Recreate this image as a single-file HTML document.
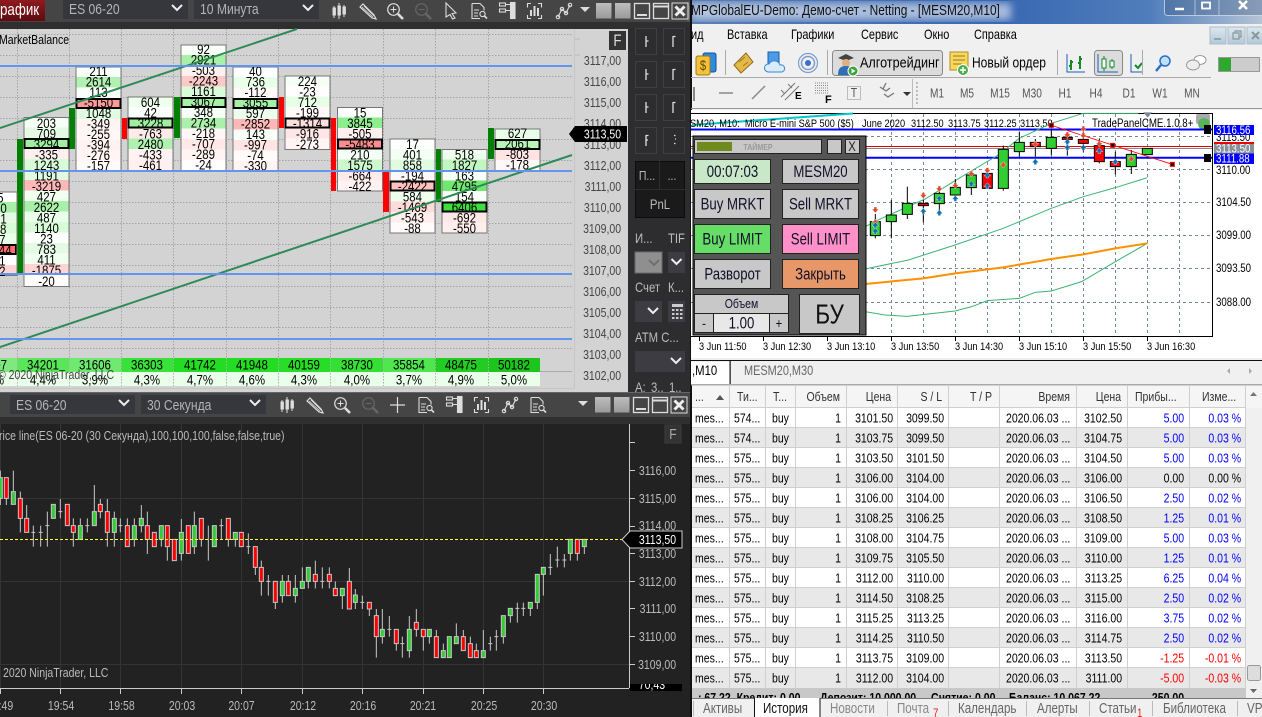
<!DOCTYPE html>
<html lang="ru"><head><meta charset="utf-8"><title>Trading</title>
<style>
html,body{margin:0;padding:0;background:#222;width:1262px;height:717px;overflow:hidden}
svg{position:absolute;left:0;top:0;display:block}
text{font-family:"Liberation Sans","Noto Sans CJK JP",sans-serif;font-size:13px;fill:#000;white-space:pre}
.l,.r,.c{transform-box:fill-box;transform:scaleX(.81)}
.f{transform-box:fill-box;transform:scaleX(.85)}
.u15 .f{transform:translateY(-1.500px) scaleX(.85)}
.u7 .f{transform:translateY(-.700px) scaleX(.85)}
.l{transform-origin:0 50%}
.r{transform-origin:100% 50%;text-anchor:end}
.c{transform-origin:50% 50%;text-anchor:middle}
.f{transform-origin:50% 50%;text-anchor:middle;font-size:13.5px}
.ax text{fill:#444}
.dk text{fill:#bbb}
.pn text{fill:#bbb}
.sm text{font-size:11.4px}
.tg{font-size:12px}
.btn text{font-size:16.3px;fill:#101028}
.b text{fill:#0000ff}
.n text{fill:#f00}
.tf text{fill:#555;font-size:12.5px}
.hd text{fill:#333;font-size:13px}
</style></head><body>
<svg width="1262" height="717" viewBox="0 0 1262 717" xmlns="http://www.w3.org/2000/svg">
<defs>
<linearGradient id="rd" x1="0" y1="0" x2="0" y2="1"><stop offset="0" stop-color="#8e1a1f"/><stop offset="1" stop-color="#5e0c10"/></linearGradient>
<linearGradient id="sq" x1="0" y1="0" x2="0" y2="1"><stop offset="0" stop-color="#bdbdbd"/><stop offset="1" stop-color="#9a9a9a"/></linearGradient>
<linearGradient id="ti" x1="0" y1="0" x2="1" y2="0"><stop offset="0" stop-color="#5c7fb6"/><stop offset=".25" stop-color="#4a73b3"/><stop offset=".55" stop-color="#3a68b2"/><stop offset=".8" stop-color="#4f7dbb"/><stop offset="1" stop-color="#b5c4d6"/></linearGradient>
<linearGradient id="md" x1="0" y1="0" x2="0" y2="1"><stop offset="0" stop-color="#dde8f0"/><stop offset="1" stop-color="#b4c8d6"/></linearGradient>
<filter id="bl"><feGaussianBlur stdDeviation="4"/></filter>
<g id="i-c" fill="none" stroke="#ddd"><path d="M2 3v12M7 0v16M12 2v12"/><rect x="1" y="5" width="2.4" height="7" fill="#ddd"/><rect x="6" y="3" width="2.4" height="9" fill="#ddd"/><rect x="11" y="4" width="2.4" height="7" fill="#ddd"/></g>
<g id="i-p" fill="none" stroke="#ddd" stroke-width="1.2"><path d="M1 4L4 1L15 12L17 16L13 15Z"/><path d="M3 4L14 14M5 3L15 13" stroke-width=".8"/></g>
<g id="i-z" fill="none" stroke="#ddd"><circle cx="6.5" cy="6.5" r="5.8" stroke-width="1.2"/><path d="M3.5 6.5h6M6.5 3.5v6"/><path d="M11 11l5 5" stroke-width="2.6"/></g>
<g id="i-m" fill="none" stroke="#666"><circle cx="6.5" cy="6.5" r="5.8" stroke-width="1.2"/><path d="M3.5 6.5h6"/><path d="M11 11l5 5" stroke-width="2.6"/></g>
<g id="i-d" fill="none" stroke="#ddd" stroke-width="1.1"><path d="M1 .5h8l4 4v3M1 .5v15h8"/><path d="M3 7h5M3 10h4M3 13h4"/><circle cx="11.5" cy="11" r="2.6"/><path d="M13.5 13l2.5 2.5" stroke-width="1.6"/></g>
<g id="i-l" fill="none" stroke="#ddd" stroke-width="1.1"><rect x=".5" y="1" width="6" height="3"/><rect x=".5" y="7" width="6" height="3"/><path d="M6.5 2.500h5M6.500 8.500h5"/><rect x="11.500" y=".5" width="4.500" height="16" fill="#ddd"/></g>
<g id="i-b" fill="none" stroke="#ddd"><path d="M4 .5H.5v4M11 .5h3.500v4M.5 12v3.500H4M14.500 12v3.500H11" stroke-width="1.1"/><path d="M4 7v6M7.500 3v10M11 5v8" stroke-width="2"/></g>
<g id="i-y" fill="none" stroke="#ddd" stroke-width="1.1"><path d="M2 14L6 6L10 10L14 2"/><circle cx="2" cy="14" r="1.700"/><circle cx="6" cy="6" r="1.700"/><circle cx="10" cy="10" r="1.700"/><circle cx="14" cy="2" r="1.700"/></g>
<g id="i-w"><rect width="15.500" height="15.500" fill="url(#sq)"/><rect x="19" width="15.500" height="15.500" fill="url(#sq)"/>
<g fill="none" stroke="#ddd" stroke-width="1.300"><rect x="38.500" y=".5" width="15" height="15"/><path d="M41 12h10" stroke-width="2"/><rect x="57.500" y=".5" width="15" height="15"/><path d="M58 3.500h14" stroke-width="2"/></g>
<rect x="76" y="0" width="16" height="16" fill="none" stroke="#ddd" stroke-width="1"/><path d="M79.500 3.500l9 9M88.500 3.500l-9 9" stroke="#eee" stroke-width="3"/></g>
<path id="dn" d="M-4 -9H4V-3H10L0 9L-10 -3H-4Z" fill="#e2492c" stroke="#fff" stroke-width="1"/>
<path id="up" d="M-4 9H4V3H10L0 -9L-10 3H-4Z" fill="#0e6fb5" stroke="#fff" stroke-width="1"/>
<g id="ck" fill="none" stroke="#eee" stroke-width="2"><path d="M-5 -3L0 2L5 -3"/></g>
</defs>

<!-- NT top -->
<rect x="0" y="0" width="690" height="22" fill="#454545"/>
<rect x="0" y="22" width="690" height="7" fill="#2f2f2f"/>
<rect x="0" y="0" width="45" height="21" fill="url(#rd)"/>
<text class="l" x="0" y="15" style="font-size:16.500px;fill:#fff">рафик</text>
<rect x="63" y="0" width="125" height="19" fill="#36373c"/>
<text class="l" x="69" y="14" style="font-size:15px;fill:#b4b4b4">ES 06-20</text>
<use href="#ck" x="177" y="8"/>
<rect x="194" y="0" width="125" height="19" fill="#36373c"/>
<text class="l" x="200" y="14" style="font-size:15px;fill:#b4b4b4">10 Минута</text>
<use href="#ck" x="308" y="8"/>
<use href="#i-c" x="332" y="3"/><use href="#i-p" x="359" y="3"/><use href="#i-z" x="387" y="3"/><use href="#i-m" x="415" y="3"/>
<path d="M446 3L456 13L452 13.500L455 18L452.500 19L450 14.500L446 17Z" fill="none" stroke="#ddd" stroke-width="1.100"/>
<use href="#i-d" x="471" y="3"/><use href="#i-l" x="499" y="2"/><use href="#i-b" x="527" y="3"/><use href="#i-y" x="556" y="3"/>
<path d="M580 7h10l-5 5z" fill="#ddd"/>
<use href="#i-w" x="596" y="3"/>

<!-- upper chart -->
<rect x="0" y="29" width="628" height="363" fill="#d3d3d3"/>
<path d="M0 34.500H572M0 55.500H572M0 76.500H572M0 97.500H572M0 118.500H572M0 139.500H572M0 160.500H572M0 181.500H572M0 202.500H572M0 223.500H572M0 244.500H572M0 265.500H572M0 286.500H572M0 307.500H572M0 327.500H572M0 348.500H572M17.500 29V386M69.500 29V386M121.500 29V386M173.500 29V386M226.500 29V386M278.500 29V386M330.500 29V386M383.500 29V386M435.500 29V386M488.500 29V386" fill="none" stroke="#a4a4a4" stroke-dasharray="1.500 1.500"/>
<path d="M574.500 29V389M0 388.500H574" stroke="#c6c6c6"/>
<path d="M0 371.500H572" stroke="#aaa"/>
<text class="l" x="-1" y="44">MarketBalance</text>

<!-- delta bars -->
<g>
<rect x="17" y="139" width="6" height="136" fill="#008000"/>
<rect x="69" y="108" width="6" height="41" fill="#008000"/>
<rect x="122" y="118" width="5" height="21" fill="#f00"/>
<rect x="174" y="97" width="6" height="41" fill="#008000"/>
<rect x="279" y="97" width="5" height="31" fill="#f00"/>
<rect x="331" y="118" width="5" height="73" fill="#f00"/>
<rect x="383" y="170" width="6" height="42" fill="#f00"/>
<rect x="436" y="149" width="5" height="53" fill="#008000"/>
<rect x="488" y="128" width="6" height="31" fill="#008000"/>
</g>

<!-- col A -->
<g transform="translate(-29,191.500)">
<rect width="46" height="84" fill="#fff"/>
<rect y="10.500" width="46" height="10.500" fill="#a8f0a8"/><rect y="21" width="46" height="10.500" fill="#e4fae4"/><rect y="31.500" width="46" height="10.500" fill="#d8fbd8"/><rect y="42" width="46" height="10.500" fill="#eaffea"/><rect x="1" y="53.500" width="44" height="9" fill="#ff7070" stroke="#000" stroke-width="2"/><rect y="73.500" width="46" height="10.500" fill="#ffd4d4"/>
<rect x=".5" y=".5" width="45.500" height="83.500" fill="none" stroke="#777"/>
<text class="f" x="23" y="11">205</text><text class="f" x="23" y="21.500">2620</text><text class="f" x="23" y="32">1351</text><text class="f" x="23" y="42.500">1148</text><text class="f" x="23" y="53">-367</text><text class="f" x="26" y="63.500">-5144</text><text class="f" x="23" y="74">-451</text><text class="f" x="23" y="84.500">-402</text>
</g>
<!-- col B -->
<g transform="translate(23.500,117)">
<rect y="0" width="46" height="10.500" fill="#f5fff5"/><rect y="10.500" width="46" height="10.500" fill="#e4fae4"/><rect y="21" width="46" height="10.500" fill="#9ef09e"/><rect y="31.500" width="46" height="10.500" fill="#fff0f0"/><rect y="42" width="46" height="10.500" fill="#d8fbd8"/><rect y="52.500" width="46" height="10.500" fill="#e0fbe0"/><rect y="63" width="46" height="10.500" fill="#ffb8b8"/><rect y="73.500" width="46" height="10.500" fill="#f0fff0"/><rect y="84" width="46" height="10.500" fill="#a8f0a8"/><rect y="94.500" width="46" height="10.500" fill="#eaffea"/><rect y="105" width="46" height="10.500" fill="#d8fbd8"/><rect y="115.500" width="46" height="10.500" fill="#fcfffc"/><rect y="126" width="46" height="10.500" fill="#e4fae4"/><rect y="136.500" width="46" height="10.500" fill="#f0fff0"/><rect y="147" width="46" height="10.500" fill="#ffd4d4"/><rect y="157.500" width="46" height="12" fill="#fffcfc"/>
<rect x=".5" y=".5" width="45" height="169" fill="none" stroke="#777"/>
<rect x="1" y="22" width="44" height="9" fill="none" stroke="#000" stroke-width="2"/>
<text class="f" x="23" y="11">203</text><text class="f" x="23" y="21.500">709</text><text class="f" x="23" y="32">3294</text><text class="f" x="23" y="42.500">-335</text><text class="f" x="23" y="53">1243</text><text class="f" x="23" y="63.500">1191</text><text class="f" x="23" y="74">-3219</text><text class="f" x="23" y="84.500">427</text><text class="f" x="23" y="95">2622</text><text class="f" x="23" y="105.500">487</text><text class="f" x="23" y="116">1140</text><text class="f" x="23" y="126.500">23</text><text class="f" x="23" y="137">783</text><text class="f" x="23" y="147.500">411</text><text class="f" x="23" y="158">-1875</text><text class="f" x="23" y="169">-20</text>
</g>
<!-- col C -->
<g class="u15" transform="translate(75.500,66.500)">
<rect y="0" width="46" height="10.500" fill="#f8fff8"/><rect y="10.500" width="46" height="10.500" fill="#b0f0b0"/><rect y="21" width="46" height="10.500" fill="#fbfffb"/><rect y="31.500" width="46" height="10.500" fill="#ff9a9a"/><rect y="42" width="46" height="10.500" fill="#e0fbe0"/><rect y="52.500" width="46" height="10.500" fill="#fff4f4"/><rect y="63" width="46" height="10.500" fill="#fff6f6"/><rect y="73.500" width="46" height="10.500" fill="#fff2f2"/><rect y="84" width="46" height="10.500" fill="#fff5f5"/><rect y="94.500" width="46" height="10" fill="#fffafa"/>
<rect x=".5" y=".5" width="45" height="104" fill="none" stroke="#777"/>
<rect x="1" y="32.500" width="44" height="9" fill="none" stroke="#000" stroke-width="2"/>
<text class="f" x="23" y="11">211</text><text class="f" x="23" y="21.500">2614</text><text class="f" x="23" y="32">113</text><text class="f" x="23" y="42.500">-5150</text><text class="f" x="23" y="53">1048</text><text class="f" x="23" y="63.500">-349</text><text class="f" x="23" y="74">-255</text><text class="f" x="23" y="84.500">-394</text><text class="f" x="23" y="95">-276</text><text class="f" x="23" y="105.500">-157</text>
</g>
<!-- col D -->
<g class="u7" transform="translate(127.500,96.500)">
<rect y="0" width="46" height="10.500" fill="#eeffee"/><rect y="10.500" width="46" height="10.500" fill="#fbfffb"/><rect y="21" width="46" height="10.500" fill="#9ef09e"/><rect y="31.500" width="46" height="10.500" fill="#ffeaea"/><rect y="42" width="46" height="10.500" fill="#b0f0b0"/><rect y="52.500" width="46" height="10.500" fill="#fff2f2"/><rect y="63" width="46" height="11" fill="#fff0f0"/>
<rect x=".5" y=".5" width="45" height="73.500" fill="none" stroke="#777"/>
<rect x="1" y="22" width="44" height="9" fill="none" stroke="#000" stroke-width="2"/>
<text class="f" x="23" y="11">604</text><text class="f" x="23" y="21.500">42</text><text class="f" x="23" y="32">3228</text><text class="f" x="23" y="42.500">-763</text><text class="f" x="23" y="53">2480</text><text class="f" x="23" y="63.500">-433</text><text class="f" x="23" y="74">-461</text>
</g>
<!-- col E -->
<g class="u15" transform="translate(180.500,44.500)">
<rect y="0" width="46" height="10.500" fill="#f9fff9"/><rect y="10.500" width="46" height="10.500" fill="#a8f0a8"/><rect y="21" width="46" height="10.500" fill="#fff0f0"/><rect y="31.500" width="46" height="10.500" fill="#ffc8c8"/><rect y="42" width="46" height="10.500" fill="#d8fbd8"/><rect y="52.500" width="46" height="10.500" fill="#a4f0a4"/><rect y="63" width="46" height="10.500" fill="#f5fff5"/><rect y="73.500" width="46" height="10.500" fill="#aaf0aa"/><rect y="84" width="46" height="10.500" fill="#fff6f6"/><rect y="94.500" width="46" height="10.500" fill="#ffe8e8"/><rect y="105" width="46" height="10.500" fill="#fff4f4"/><rect y="115.500" width="46" height="10.500" fill="#fffdfd"/>
<rect x=".5" y=".5" width="45" height="125.500" fill="none" stroke="#777"/>
<rect x="1" y="53.500" width="44" height="9" fill="none" stroke="#000" stroke-width="2"/>
<text class="f" x="23" y="11">92</text><text class="f" x="23" y="21.500">2921</text><text class="f" x="23" y="32">-503</text><text class="f" x="23" y="42.500">-2243</text><text class="f" x="23" y="53">1161</text><text class="f" x="23" y="63.500">3067</text><text class="f" x="23" y="74">348</text><text class="f" x="23" y="84.500">2734</text><text class="f" x="23" y="95">-218</text><text class="f" x="23" y="105.500">-707</text><text class="f" x="23" y="116">-289</text><text class="f" x="23" y="126.500">-24</text>
</g>
<!-- col F -->
<g class="u15" transform="translate(232.500,66.500)">
<rect y="0" width="46" height="10.500" fill="#fcfffc"/><rect y="10.500" width="46" height="10.500" fill="#e8ffe8"/><rect y="21" width="46" height="10.500" fill="#fffafa"/><rect y="31.500" width="46" height="10.500" fill="#a4f0a4"/><rect y="42" width="46" height="10.500" fill="#ecffec"/><rect y="52.500" width="46" height="10.500" fill="#ffb8b8"/><rect y="63" width="46" height="10.500" fill="#f8fff8"/><rect y="73.500" width="46" height="10.500" fill="#ffe4e4"/><rect y="84" width="46" height="10.500" fill="#fffbfb"/><rect y="94.500" width="46" height="10" fill="#fff3f3"/>
<rect x=".5" y=".5" width="45" height="104" fill="none" stroke="#777"/>
<rect x="1" y="32.500" width="44" height="9" fill="none" stroke="#000" stroke-width="2"/>
<text class="f" x="23" y="11">40</text><text class="f" x="23" y="21.500">736</text><text class="f" x="23" y="32">-112</text><text class="f" x="23" y="42.500">3055</text><text class="f" x="23" y="53">597</text><text class="f" x="23" y="63.500">-2852</text><text class="f" x="23" y="74">143</text><text class="f" x="23" y="84.500">-997</text><text class="f" x="23" y="95">-74</text><text class="f" x="23" y="105.500">-330</text>
</g>
<!-- col G -->
<g class="u7" transform="translate(284.500,75.500)">
<rect y="0" width="46" height="10.500" fill="#f6fff6"/><rect y="10.500" width="46" height="10.500" fill="#fffdfd"/><rect y="21" width="46" height="10.500" fill="#e8ffe8"/><rect y="31.500" width="46" height="10.500" fill="#fff8f8"/><rect y="42" width="46" height="10.500" fill="#ffdede"/><rect y="52.500" width="46" height="10.500" fill="#ffe6e6"/><rect y="63" width="46" height="11" fill="#fff5f5"/>
<rect x=".5" y=".5" width="45" height="73.500" fill="none" stroke="#777"/>
<rect x="1" y="43" width="44" height="9" fill="none" stroke="#000" stroke-width="2"/>
<text class="f" x="23" y="11">224</text><text class="f" x="23" y="21.500">-23</text><text class="f" x="23" y="32">712</text><text class="f" x="23" y="42.500">-199</text><text class="f" x="23" y="53">-1314</text><text class="f" x="23" y="63.500">-916</text><text class="f" x="23" y="74">-273</text>
</g>
<!-- col H -->
<g class="u7" transform="translate(337,107)">
<rect y="0" width="46" height="10.500" fill="#fcfffc"/><rect y="10.500" width="46" height="10.500" fill="#8cee8c"/><rect y="21" width="46" height="10.500" fill="#fff0f0"/><rect y="31.500" width="46" height="10.500" fill="#ff8c8c"/><rect y="42" width="46" height="10.500" fill="#f6fff6"/><rect y="52.500" width="46" height="10.500" fill="#ccf8cc"/><rect y="63" width="46" height="10.500" fill="#ffeaea"/><rect y="73.500" width="46" height="10.500" fill="#fff2f2"/>
<rect x=".5" y=".5" width="45" height="83.500" fill="none" stroke="#777"/>
<rect x="1" y="32.500" width="44" height="9" fill="none" stroke="#000" stroke-width="2"/>
<text class="f" x="23" y="11">15</text><text class="f" x="23" y="21.500">3845</text><text class="f" x="23" y="32">-505</text><text class="f" x="23" y="42.500">-5483</text><text class="f" x="23" y="53">210</text><text class="f" x="23" y="63.500">1575</text><text class="f" x="23" y="74">-664</text><text class="f" x="23" y="84.500">-422</text>
</g>
<!-- col I -->
<g class="u7" transform="translate(389.500,138.500)">
<rect y="0" width="46" height="10.500" fill="#fcfffc"/><rect y="10.500" width="46" height="10.500" fill="#f2fff2"/><rect y="21" width="46" height="10.500" fill="#e0fbe0"/><rect y="31.500" width="46" height="10.500" fill="#fff8f8"/><rect y="42" width="46" height="10.500" fill="#ffc0c0"/><rect y="52.500" width="46" height="10.500" fill="#eeffee"/><rect y="63" width="46" height="10.500" fill="#ffdada"/><rect y="73.500" width="46" height="10.500" fill="#ffeeee"/><rect y="84" width="46" height="10.500" fill="#fffbfb"/>
<rect x=".5" y=".5" width="45" height="94" fill="none" stroke="#777"/>
<rect x="1" y="43" width="44" height="9" fill="none" stroke="#000" stroke-width="2"/>
<text class="f" x="23" y="11">17</text><text class="f" x="23" y="21.500">401</text><text class="f" x="23" y="32">858</text><text class="f" x="23" y="42.500">-194</text><text class="f" x="23" y="53">-2422</text><text class="f" x="23" y="63.500">584</text><text class="f" x="23" y="74">-1469</text><text class="f" x="23" y="84.500">-543</text><text class="f" x="23" y="95">-88</text>
</g>
<!-- col J -->
<g class="u7" transform="translate(441.500,149)">
<rect y="0" width="46" height="10.500" fill="#eeffee"/><rect y="10.500" width="46" height="10.500" fill="#c0f6c0"/><rect y="21" width="46" height="10.500" fill="#f8fff8"/><rect y="31.500" width="46" height="10.500" fill="#70e870"/><rect y="42" width="46" height="10.500" fill="#f8fff8"/><rect y="52.500" width="46" height="10.500" fill="#3ce03c"/><rect y="63" width="46" height="10.500" fill="#ffe8e8"/><rect y="73.500" width="46" height="10.500" fill="#ffeeee"/>
<rect x=".5" y=".5" width="45" height="83.500" fill="none" stroke="#777"/>
<rect x="1" y="53.500" width="44" height="9" fill="none" stroke="#000" stroke-width="2"/>
<text class="f" x="23" y="11">518</text><text class="f" x="23" y="21.500">1827</text><text class="f" x="23" y="32">163</text><text class="f" x="23" y="42.500">4795</text><text class="f" x="23" y="53">154</text><text class="f" x="23" y="63.500">6406</text><text class="f" x="23" y="74">-692</text><text class="f" x="23" y="84.500">-550</text>
</g>
<!-- col K -->
<g class="u15" transform="translate(494.500,128.500)">
<rect y="0" width="46" height="10.500" fill="#e8ffe8"/><rect y="10.500" width="46" height="10.500" fill="#b8f4b8"/><rect y="21" width="46" height="10.500" fill="#ffe4e4"/><rect y="31.500" width="46" height="10.500" fill="#fff8f8"/>
<rect x=".5" y=".5" width="45" height="41.500" fill="none" stroke="#777"/>
<rect x="1" y="11.500" width="44" height="9" fill="none" stroke="#000" stroke-width="2"/>
<text class="f" x="23" y="11">627</text><text class="f" x="23" y="21.500">2061</text><text class="f" x="23" y="32">-803</text><text class="f" x="23" y="42.500">-178</text>
</g>

<!-- overlay lines -->
<path d="M0 128L297 29M0 347L572 155" stroke="#2e8b57" stroke-width="2" fill="none"/>
<path d="M0 66H572M0 171H572M0 274H572M0 339H572" stroke="#6495ed" stroke-width="2" fill="none"/>

<!-- volume rows -->
<g>
<rect x="0" y="358" width="17" height="14" fill="#7fe97f"/><rect x="17" y="358" width="52" height="14" fill="#58e758"/><rect x="69" y="358" width="52" height="14" fill="#70e970"/><rect x="121" y="358" width="52" height="14" fill="#38e238"/><rect x="173" y="358" width="53" height="14" fill="#22dd22"/><rect x="226" y="358" width="52" height="14" fill="#22dd22"/><rect x="278" y="358" width="52" height="14" fill="#26de26"/><rect x="330" y="358" width="53" height="14" fill="#33e033"/><rect x="383" y="358" width="52" height="14" fill="#50e650"/><rect x="435" y="358" width="53" height="14" fill="#22cc22"/><rect x="488" y="358" width="52" height="14" fill="#1cc61c"/>
<rect x="0" y="372" width="540" height="14" fill="#eaffea"/>
<path d="M17.500 358V386M69.500 358V386M121.500 358V386M173.500 358V386M226.500 358V386M278.500 358V386M330.500 358V386M383.500 358V386M435.500 358V386M488.500 358V386" stroke="#b0b0b0" stroke-dasharray="1.500 1.500"/>
<text class="f" x="-9" y="369.500">38207</text><text class="f" x="43" y="369.500">34201</text><text class="f" x="95" y="369.500">31606</text><text class="f" x="147" y="369.500">36303</text><text class="f" x="200" y="369.500">41742</text><text class="f" x="252" y="369.500">41948</text><text class="f" x="304" y="369.500">40159</text><text class="f" x="357" y="369.500">38730</text><text class="f" x="409" y="369.500">35854</text><text class="f" x="461" y="369.500">48475</text><text class="f" x="514" y="369.500">50182</text>
<text class="f" x="-9" y="384.500">4,0%</text><text class="f" x="43" y="384.500">4,4%</text><text class="f" x="95" y="384.500">3,9%</text><text class="f" x="147" y="384.500">4,3%</text><text class="f" x="200" y="384.500">4,7%</text><text class="f" x="252" y="384.500">4,6%</text><text class="f" x="304" y="384.500">4,3%</text><text class="f" x="357" y="384.500">4,0%</text><text class="f" x="409" y="384.500">3,7%</text><text class="f" x="461" y="384.500">4,9%</text><text class="f" x="514" y="384.500">5,0%</text>
</g>
<text class="l" x="-2" y="379" style="fill:#444">© 2020 NinjaTrader, LLC</text>

<!-- upper axis -->
<g class="ax">
<path d="M575 39h5M575 55h5" stroke="#bbb"/>
<text class="r" x="621" y="65">3117,00</text><text class="r" x="621" y="86">3116,00</text><text class="r" x="621" y="107">3115,00</text><text class="r" x="621" y="128">3114,00</text><text class="r" x="621" y="149">3113,00</text><text class="r" x="621" y="170">3112,00</text><text class="r" x="621" y="191">3111,00</text><text class="r" x="621" y="212">3110,00</text><text class="r" x="621" y="233">3109,00</text><text class="r" x="621" y="254">3108,00</text><text class="r" x="621" y="275">3107,00</text><text class="r" x="621" y="296">3106,00</text><text class="r" x="621" y="317">3105,00</text><text class="r" x="621" y="338">3104,00</text><text class="r" x="621" y="359">3103,00</text><text class="r" x="621" y="380">3102,00</text>
</g>
<path d="M569 134L575 126H627V142H575Z" fill="#000"/>
<text class="r" x="621" y="138.500" style="fill:#fff">3113,50</text>
<rect x="609" y="31" width="17" height="19" fill="#333"/>
<text class="c" x="617.500" y="46" style="font-size:16.500px;fill:#ddd">F</text>

<!-- NT panel -->
<rect x="628" y="29" width="62" height="363" fill="#2d2d30"/>
<g fill="none" stroke="#3f3f44"><rect x="635.500" y="28.500" width="21" height="26"/><rect x="663.500" y="28.500" width="21" height="26"/><rect x="635.500" y="61.500" width="21" height="26"/><rect x="663.500" y="61.500" width="21" height="26"/><rect x="635.500" y="94.500" width="21" height="26"/><rect x="663.500" y="94.500" width="21" height="26"/><rect x="635.500" y="127.500" width="21" height="26"/><rect x="663.500" y="127.500" width="21" height="26"/></g>
<g fill="none" stroke="#ddd" stroke-width="1.300">
<path d="M646 36v11M646 41h2.500M673 36v11M673 36.500h2.500M646 69v11M646 74h2.500M673 69v11M673 69.500h2.500M646 102v11M646 107h2.500M673 102v11M673 102.500h2.500M646 135v11M646 135.500h2.500M646 140h2"/>
<path d="M674 135.500h1.500M675 139h1M674 143.500h1.500"/>
</g>
<rect x="635.500" y="161.500" width="49" height="56" fill="#1a1a1a" stroke="#0c0c0c"/>
<path d="M659.500 161v28M635 189.500h50" stroke="#2d2d30"/>
<g class="pn">
<text class="c" x="647" y="180">П...</text><text class="c" x="672" y="180">...</text>
<text class="c" x="660" y="209" style="font-size:14px">PnL</text>
<text class="l" x="635" y="243" style="font-size:14px">И...</text><text class="l" x="668" y="243" style="font-size:14px">TIF</text>
<text class="l" x="635" y="292" style="font-size:14px">Счет</text><text class="l" x="668" y="292" style="font-size:14px">К...</text>
<text class="l" x="635" y="342" style="font-size:14px">ATM С...</text>
<text class="c" x="652" y="366">...</text>
<text class="l" x="635" y="392" style="font-size:14px">А:</text><text class="l" x="651" y="392" style="font-size:14px">3..</text><text class="l" x="669" y="392" style="font-size:14px">1..</text>
</g>
<rect x="635" y="252" width="27" height="21" fill="#8f8f8f" stroke="#6a6a6a"/>
<g fill="none" stroke="#6f6f6f" stroke-width="2"><path d="M649 260l5 5l5-5"/></g>
<rect x="668" y="252" width="17" height="21" fill="#3c3c42"/><use href="#ck" x="676.500" y="262"/>
<rect x="635" y="301" width="27" height="21" fill="#3c3c42"/><use href="#ck" x="653" y="311"/>
<rect x="668" y="301" width="17" height="21" fill="#3c3c42"/>
<g fill="#ccc"><rect x="672" y="304" width="11" height="3"/><path d="M672 309h2.500v2H672zM676 309h2.500v2H676zM680 309h2.500v2H680zM672 313h2.500v2H672zM676 313h2.500v2H676zM680 313h2.500v2H680zM672 317h2.500v2H672zM676 317h2.500v2H676zM680 317h2.500v2H680z"/></g>
<rect x="635" y="351" width="50" height="21" fill="#3c3c42"/><use href="#ck" x="676" y="361"/>

<!-- NT lower toolbar -->
<rect x="0" y="392" width="690" height="1" fill="#666"/>
<rect x="0" y="393" width="690" height="24" fill="#454545"/>
<rect x="0" y="417" width="690" height="7" fill="#2f2f2f"/>
<rect x="10" y="395" width="125" height="19" fill="#36373c"/>
<text class="l" x="16" y="410" style="font-size:15px;fill:#b4b4b4">ES 06-20</text><use href="#ck" x="124" y="403"/>
<rect x="141" y="395" width="125" height="19" fill="#36373c"/>
<text class="l" x="147" y="410" style="font-size:15px;fill:#b4b4b4">30 Секунда</text><use href="#ck" x="255" y="403"/>
<use href="#i-c" x="280" y="397"/><use href="#i-p" x="306" y="397"/><use href="#i-z" x="334" y="397"/><use href="#i-m" x="362" y="397"/>
<path d="M397.500 397v16M390 405h15" stroke="#ddd" stroke-width="1.200"/>
<use href="#i-d" x="418" y="397"/><use href="#i-l" x="446" y="396"/><use href="#i-b" x="474" y="397"/><use href="#i-y" x="502" y="397"/><use href="#i-d" x="530" y="397"/>
<path d="M578 401h10l-5 5z" fill="#ddd"/>
<use href="#i-w" x="595" y="397"/>

<!-- lower chart -->
<rect x="0" y="424" width="690" height="293" fill="#222"/>
<path d="M0 498.500H629M0 581.500H629M0 664.500H629M.5 424V688M60.500 424V688M120.500 424V688M181.500 424V688M241.500 424V688M302.500 424V688M362.500 424V688M423.500 424V688M483.500 424V688M543.500 424V688" stroke="#343434" stroke-width="1"/>
<g transform="translate(0,430) scale(.33333)">
<path fill="none" stroke="#c8c8c8" stroke-width="3" d="M1 122V225M19 143V225M40 122V223M61 185V307M80 225V307M100 287V350M122 287V350M142 245V350M181 207V265M220 265V350M241 265V328M262 265V307M283 165V287M301 207V265M322 207V350M343 245V350M361 265V307M382 265V350M403 265V350M424 225V307M442 245V372M484 287V350M502 287V392M544 267V392M583 245V372M604 265V350M625 287V392M664 267V328M685 265V350M706 307V350M745 310V372M766 350V435M784 392V497M805 435V497M826 454V537M847 435V518M865 435V497M886 435V518M907 412V475M925 412V475M946 392V475M967 412V475M988 412V475M1006 454V497M1027 475V537M94 307h12M116 307h12M136 287h12M175 245h12M256 287h12M355 287h12M658 287h12M739 350h12M799 454h12M961 454h12"/>
<path fill="#32cd32" stroke="#c8c8c8" stroke-width="3" d="M-5 143h12v62h-12zM34 185h12v38h-12zM154 223h12v42h-12zM235 287h12v41h-12zM277 245h12v42h-12zM337 265h12v42h-12zM397 287h12v41h-12zM418 265h12v22h-12zM478 287h12v41h-12zM538 307h12v63h-12zM577 287h12v63h-12zM637 287h12v63h-12zM700 307h12v21h-12zM841 454h12v43h-12zM880 475h12v22h-12zM901 454h12v21h-12zM919 412h12v42h-12zM1021 475h12v22h-12z"/>
<path fill="#f00" stroke="#c8c8c8" stroke-width="3" d="M13 143h12v62h-12zM55 205h12v60h-12zM74 265h12v42h-12zM196 223h12v64h-12zM214 287h12v20h-12zM295 223h12v22h-12zM316 245h12v62h-12zM376 287h12v63h-12zM436 287h12v41h-12zM457 307h12v43h-12zM496 287h12v63h-12zM517 328h12v64h-12zM559 287h12v83h-12zM598 265h12v63h-12zM679 265h12v63h-12zM718 307h12v43h-12zM760 350h12v62h-12zM778 412h12v42h-12zM820 454h12v63h-12zM859 454h12v43h-12zM940 433h12v21h-12zM982 433h12v21h-12zM1000 475h12v22h-12z"/>
</g>
<g transform="translate(345,430) scale(.33333)">
<path fill="none" stroke="#c8c8c8" stroke-width="3" d="M13 414V537M31 477V537M52 497V537M73 517V558M94 537V683M112 537V641M133 558V620M154 598V662M172 620V683M193 558V683M214 537V620M235 598V662M253 598V641M274 600V683M295 641V683M334 580V641M355 600V662M376 620V683M394 641V683M415 600V683M436 620V662M454 600V662M475 557V641M496 535V578M517 518V578M535 518V558M556 517V558M577 433V537M595 412V497M616 372V435M637 350V412M658 372V412M676 328V392M697 328V392M718 328V372M46 517h12M127 598h12M166 641h12M430 641h12M448 620h12M511 535h12M529 535h12M610 412h12M631 390h12M652 390h12"/>
<path fill="#32cd32" stroke="#c8c8c8" stroke-width="3" d="M25 495h12v22h-12zM106 598h12v22h-12zM187 598h12v64h-12zM247 598h12v22h-12zM289 662h12v21h-12zM307 620h12v63h-12zM328 620h12v21h-12zM409 662h12v21h-12zM469 557h12v63h-12zM490 535h12v22h-12zM550 517h12v18h-12zM571 433h12v84h-12zM589 412h12v21h-12zM670 328h12v42h-12zM712 328h12v22h-12z"/>
<path fill="#f00" stroke="#c8c8c8" stroke-width="3" d="M7 454h12v83h-12zM67 517h12v20h-12zM88 557h12v63h-12zM148 598h12v43h-12zM208 577h12v21h-12zM229 598h12v22h-12zM268 620h12v63h-12zM349 620h12v42h-12zM370 641h12v42h-12zM388 662h12v21h-12zM691 328h12v42h-12z"/>
</g>
<path d="M0 539.500H623" stroke="#ffff33" stroke-dasharray="3 2" stroke-width="1"/>
<path d="M0 688.500H629M629.500 424V688" stroke="#ccc"/>
<path d="M.5 688v6M60.500 688v6M120.500 688v6M181.500 688v6M241.500 688v6M302.500 688v6M362.500 688v6M423.500 688v6M483.500 688v6M543.500 688v6M630 442.500h5M630 470.500h5M630 498.500h5M630 526.500h5M630 553.500h5M630 581.500h5M630 608.500h5M630 636.500h5M630 664.500h5" stroke="#ccc"/>
<g class="dk">
<text class="l" x="-1" y="440">rice line(ES 06-20 (30 Секунда),100,100,100,false,false,true)</text>
<text class="l" x="3" y="677">2020 NinjaTrader, LLC</text>
<text class="c" x="0" y="710">19:49</text><text class="c" x="61" y="710">19:54</text><text class="c" x="121.500" y="710">19:58</text><text class="c" x="182" y="710">20:03</text><text class="c" x="241.500" y="710">20:07</text><text class="c" x="303" y="710">20:12</text><text class="c" x="363" y="710">20:16</text><text class="c" x="423" y="710">20:21</text><text class="c" x="484" y="710">20:25</text><text class="c" x="544" y="710">20:30</text>
<text class="r" x="676" y="475">3116,00</text><text class="r" x="676" y="503">3115,00</text><text class="r" x="676" y="530">3114,00</text><text class="r" x="676" y="558">3113,00</text><text class="r" x="676" y="586">3112,00</text><text class="r" x="676" y="613">3111,00</text><text class="r" x="676" y="641">3110,00</text><text class="r" x="676" y="669">3109,00</text>
</g>
<path d="M622 539.500L630 531H682V548H630Z" fill="#000" stroke="#ccc"/>
<text class="r" x="676" y="544" style="fill:#fff">3113,50</text>
<rect x="630" y="684" width="52" height="7" fill="#000"/>
<text class="r" x="665" y="689" style="fill:#fff">70,43</text>
<rect x="622" y="676" width="68" height="8" fill="#222"/><rect x="629" y="676" width="1" height="12" fill="#ccc"/>
<rect x="665" y="425" width="16" height="18" fill="#333" stroke="#3c3c3c"/>
<text class="c" x="673" y="439" style="font-size:15px;fill:#aaa">F</text>

<!-- MT5 window -->
<rect x="690" y="0" width="572" height="717" fill="#f0f0f0"/>
<rect x="690" y="0" width="572" height="24" fill="url(#ti)"/>
<rect x="691" y="3" width="320" height="17" fill="#fff" opacity=".55" filter="url(#bl)"/>
<rect x="690" y="0" width="2" height="717" fill="#111"/>
<text class="l" x="691" y="15" style="font-size:14.700px;fill:#111">MPGlobalEU-Demo: Демо-счет - Netting - [MESM20,M10]</text>
<rect x="1164.500" y="-3" width="100" height="18.500" rx="3" fill="#33527f" fill-opacity=".35" stroke="#dde6f0" stroke-opacity=".7"/>
<path d="M1195 0v15M1219 0v15" stroke="#dde6f0" stroke-opacity=".6"/>
<path d="M1175 9h9" stroke="#fff" stroke-width="2.500"/><rect x="1202" y="2.500" width="8" height="6" fill="none" stroke="#fff" stroke-width="1.800"/>
<path d="M1239 1l8 8M1247 1l-8 8" stroke="#fff" stroke-width="2.500"/>

<!-- menu -->
<g><text class="l" x="691" y="39" style="font-size:13.500px">ид</text><text class="l" x="727" y="39" style="font-size:13.500px">Вставка</text><text class="l" x="791" y="39" style="font-size:13.500px">Графики</text><text class="l" x="861" y="39" style="font-size:13.500px">Сервис</text><text class="l" x="924" y="39" style="font-size:13.500px">Окно</text><text class="l" x="974" y="39" style="font-size:13.500px">Справка</text></g>
<rect x="1210" y="27" width="16" height="17" fill="url(#md)" stroke="#a8bcc8"/><rect x="1228" y="27" width="17" height="17" fill="url(#md)" stroke="#a8bcc8"/><rect x="1247" y="27" width="16" height="17" fill="url(#md)" stroke="#a8bcc8"/>
<path d="M1214 39h7" stroke="#8aa" stroke-width="2"/><path d="M1233 33h6v6h-6zM1235 33v-2h6v6h-2" fill="none" stroke="#899" stroke-width="1.200"/><path d="M1252 32l7 7M1259 32l-7 7" stroke="#899" stroke-width="2"/>
<rect x="691" y="77" width="520" height="1" fill="#aaa"/>

<!-- toolbar 1 icons -->
<rect x="703" y="53" width="13" height="19" rx="2" fill="#2e8ae0" stroke="#14508e"/>
<rect x="696" y="56" width="14" height="19" rx="2" fill="#f3c23a" stroke="#a07a12"/>
<text class="c" x="703" y="70" style="font-size:14px;fill:#604a00">$</text>
<path d="M725.500 50v25" stroke="#aaa"/>
<path d="M734 65L746 53L753 62L741 73Z" fill="#e5b948" stroke="#8f6a1a"/><path d="M739 62l6-5M743 66l5-4" stroke="#a37820"/>
<rect x="768" y="52" width="11" height="13" fill="#4a9be8" stroke="#1b5ea8"/><path d="M768 72a4 4 0 0 1 1-8a6 6 0 0 1 11 1a3.500 3.500 0 0 1 2 7z" fill="#d9ecfb" stroke="#3b86cf"/>
<g fill="none" stroke="#7e9ad0"><circle cx="808" cy="63" r="9.500" stroke-width="1.200"/><circle cx="808" cy="63" r="6.500" stroke-width="1.500"/></g><circle cx="808" cy="63" r="3" fill="#3b6ec8"/>
<path d="M827.500 50v25" stroke="#aaa"/>
<rect x="832.500" y="50.500" width="110" height="25" rx="3" fill="#dcdcdc" stroke="#888"/>
<path d="M838 58L846 54L854 58L846 61Z" fill="#444"/><circle cx="846" cy="63" r="4" fill="#e0b080"/><path d="M838 75c0-8 4-9 8-9s7 2 7 6v3z" fill="#2f6fb7"/><circle cx="853" cy="71" r="5" fill="#3ca33c" stroke="#fff"/><path d="M851.500 68.500v5l4-2.500z" fill="#fff"/>
<text class="l" x="860" y="67.500" style="font-size:14.500px;transform:scaleX(.87)">Алготрейдинг</text>
<rect x="950" y="52" width="18" height="18" fill="#f6d860" stroke="#b48e1c"/><path d="M953 56h12M953 60h12M953 64h9" stroke="#9a7a18"/>
<circle cx="963" cy="70" r="5.500" fill="#4cae4c" stroke="#fff"/><path d="M960 70h6M963 67v6" stroke="#fff" stroke-width="1.500"/>
<text class="l" x="972" y="67.500" style="font-size:14.500px;transform:scaleX(.83)">Новый ордер</text>
<path d="M1057.500 50v25" stroke="#aaa"/>
<path d="M1067 54v18h18" fill="none" stroke="#1b5cb8"/><path d="M1071 60v10M1071 66h-2M1071 62h2M1080 56v13M1080 63h-2M1080 59h2" fill="none" stroke="#118a2a" stroke-width="2"/>
<rect x="1094.500" y="50.500" width="28" height="25" rx="3" fill="#dcdcdc" stroke="#888"/>
<path d="M1098 54v18h20" fill="none" stroke="#1b5cb8"/><path d="M1104 56v15M1112 59v10" stroke="#118a2a"/><rect x="1102" y="59" width="4" height="9" fill="#fff" stroke="#118a2a"/><rect x="1110" y="61" width="4" height="6" fill="#fff" stroke="#118a2a"/>
<path d="M1131 54v18h11" fill="none" stroke="#1b5cb8"/><path d="M1135 65l3 3l4-5" fill="none" stroke="#118a2a" stroke-width="2"/>
<path d="M1142.500 50v25" stroke="#aaa"/>
<circle cx="1165" cy="61" r="5" fill="#bfe0fa" stroke="#2a6fc0" stroke-width="1.500"/><path d="M1161 65l-5 6" stroke="#2a6fc0" stroke-width="2.500"/>
<ellipse cx="1200" cy="60" rx="6" ry="4.500" fill="#fff" stroke="#999"/><ellipse cx="1193" cy="65" rx="6.500" ry="5" fill="#eee" stroke="#999"/>
<rect x="1218.500" y="57.500" width="41" height="14" fill="#ccc" stroke="#999"/><rect x="1219" y="58" width="12" height="13" fill="#2fa82f"/>

<!-- toolbar 2 -->
<g transform="translate(0,-9)">
<path d="M694 96v14" stroke="#888" stroke-width="2"/><path d="M719 102h14" stroke="#888" stroke-width="1.500"/><path d="M752 108l13-13" stroke="#888" stroke-width="1.500"/>
<g stroke="#777" fill="none"><path d="M781 106l14-14M785 109l14-14M781 99l4 4M788 93l4 4"/></g>
<text x="795" y="108" style="font-size:10px;font-weight:bold">E</text>
<g stroke="#888" stroke-dasharray="1 1"><path d="M815 92h13M815 94.500h13M815 97h13M815 99.500h13M815 102h13"/></g><text x="825" y="112" style="font-size:11px;font-weight:bold">F</text>
<rect x="847.500" y="95.500" width="13" height="13" fill="none" stroke="#888" stroke-dasharray="1 1"/><text class="c" x="854" y="106" style="font-size:13px;fill:#555">T</text>
<path d="M880 96l6 4l4-3M884 103l4 3l6-4M886 92l-3 6" fill="none" stroke="#777" stroke-width="1.300"/>
<path d="M903 101h8l-4 4z" fill="#333"/>
</g>
<path d="M912.500 79v29" stroke="#bbb"/><path d="M917 82v24" stroke="#bbb" stroke-dasharray="2 2" stroke-width="2"/>
<g class="tf"><text class="c" x="937" y="97.500">M1</text><text class="c" x="967" y="97.500">M5</text><text class="c" x="1000" y="97.500">M15</text><text class="c" x="1032" y="97.500">M30</text><text class="c" x="1065" y="97.500">H1</text><text class="c" x="1096" y="97.500">H4</text><text class="c" x="1129" y="97.500">D1</text><text class="c" x="1160" y="97.500">W1</text><text class="c" x="1192" y="97.500">MN</text></g>
<rect x="691" y="108" width="571" height="1" fill="#999"/>

<!-- MT5 chart -->
<rect x="691" y="110" width="571" height="249" fill="#fff"/>
<path d="M691 113.500H1212M1212.500 113V337M691 336.500H1212" stroke="#000" fill="none"/>
<path d="M691 136.500H1212M691 169.500H1212M691 202.500H1212M691 235.500H1212M691 268.500H1212M691 302.500H1212M891.500 114V336M923.500 114V336M955.500 114V336M987.500 114V336M1019.500 114V336M1051.500 114V336M1083.500 114V336M1115.500 114V336M1147.500 114V336M1179.500 114V336" stroke="#778899" stroke-dasharray="3 3" fill="none"/>
<path d="M692 125L853 113.500" stroke="#00c8c8" stroke-width="2"/>
<g class="sm"><text class="l" x="690" y="127">SM20, M10:  Micro E-mini S&amp;P 500 ($5)</text><text class="l" x="862" y="127">June 2020</text><text class="l" x="911" y="127">3112.50</text><text class="l" x="948" y="127">3113.75</text><text class="l" x="984" y="127">3112.25</text><text class="l" x="1020" y="127">3113.50</text><text class="l" x="1092" y="127" style="font-size:12px">TradePanelCME.1.0.8+</text></g>
<rect x="1196" y="114" width="14" height="10" fill="#aaa" rx="2"/><circle cx="1204" cy="124" r="6" fill="#58b45a"/>
<path d="M691 129.500H1212" stroke="#00f" stroke-width="2"/>
<path d="M691 146.500H1212" stroke="#d00"/><path d="M691 148.500H1212" stroke="#889"/>
<path d="M691 157.700H1212" stroke="#00f" stroke-width="2"/>
<g transform="translate(865,105) scale(.33333)">
<path fill="none" stroke="#3cb371" stroke-width="3" d="M0 365L50 340L180 282L307 205L400 150L463 100L559 55L655 25L820 25"/>
<path fill="none" stroke="#3cb371" stroke-width="3" d="M0 492L130 465L270 420L415 370L559 310L655 275L751 248L847 218"/>
<path fill="none" stroke="#3cb371" stroke-width="3" d="M0 620L60 630L125 634L270 618L320 605L367 587L463 580L511 562L559 558L650 530L751 470L847 415"/>
<path fill="none" stroke="#ff9000" stroke-width="6" d="M0 537L175 520L271 505L415 487L559 462L655 448L751 430L847 415"/>
<path d="M835 22h26l-13 16z" fill="#778899"/>
<path fill="none" stroke="#000" stroke-width="3" d="M31 327V400M79 285V400M127 245V342M175 285V352M223 245V330M271 222V285M319 198V270M367 190V250M415 122V257M463 80V155M511 102V155M559 73V152M607 85V152M655 70V140M703 100V175M751 140V208M799 135V207M847 130V149"/>
<path fill="#32cd32" stroke="#000" stroke-width="3" d="M16 350h30v42h-30zM64 330h30v20h-30zM112 295h30v33h-30zM208 265h30v31h-30zM256 247h30v23h-30zM304 210h30v38h-30zM400 133h30v117h-30zM448 112h30v28h-30zM544 97h30v33h-30zM784 148h30v37h-30zM832 130h30v19h-30z"/>
<path fill="#f00" stroke="#000" stroke-width="3" d="M160 295h30v7h-30zM352 205h30v45h-30zM496 112h30v13h-30zM592 97h30v6h-30zM640 103h30v12h-30zM688 122h30v48h-30zM736 170h30v15h-30z"/>
<path d="M559 61L922 178" stroke="#f00" stroke-width="2.500"/>
<path d="M553 55h12v12h-12zM737 115h12v12h-12zM916 172h12v12h-12z" fill="#111" stroke="#f00" stroke-width="3"/>
<use href="#dn" x="31" y="315"/><use href="#dn" x="31" y="352"/><use href="#dn" x="175" y="272"/><use href="#dn" x="223" y="252"/><use href="#dn" x="271" y="242"/><use href="#dn" x="319" y="207"/><use href="#dn" x="367" y="197"/><use href="#dn" x="415" y="180"/><use href="#dn" x="511" y="118"/><use href="#dn" x="607" y="90"/><use href="#dn" x="655" y="72"/><use href="#dn" x="655" y="92"/><use href="#dn" x="703" y="117"/><use href="#dn" x="799" y="162"/>
<use href="#up" x="31" y="360"/><use href="#up" x="31" y="378"/><use href="#up" x="175" y="318"/><use href="#up" x="223" y="323"/><use href="#up" x="223" y="280"/><use href="#up" x="271" y="280"/><use href="#up" x="319" y="236"/><use href="#up" x="367" y="210"/><use href="#up" x="367" y="242"/><use href="#up" x="511" y="170"/><use href="#up" x="607" y="110"/><use href="#up" x="607" y="127"/><use href="#up" x="655" y="127"/><use href="#up" x="703" y="137"/><use href="#up" x="751" y="170"/>
</g>
<!-- MT5 axis -->
<g><text class="l tg" x="1216" y="141">3115.50</text><text class="l tg" x="1216" y="174">3110.00</text><text class="l tg" x="1216" y="206">3104.50</text><text class="l tg" x="1216" y="239">3099.00</text><text class="l tg" x="1216" y="272">3093.50</text><text class="l tg" x="1216" y="306">3088.00</text></g>
<rect x="1204" y="125" width="7" height="9" fill="#000"/><rect x="1204" y="154" width="7" height="8" fill="#000"/>
<rect x="1214" y="125" width="40" height="10" fill="#00f"/><text class="l tg" x="1216" y="134" style="fill:#fff">3116.56</text>
<rect x="1214" y="142" width="40" height="2" fill="#e00"/><rect x="1214" y="144" width="40" height="9.500" fill="#889099"/><text class="l tg" x="1216" y="152.500" style="fill:#fff">3113.50</text>
<rect x="1214" y="153.500" width="40" height="10.500" fill="#00f"/><text class="l tg" x="1216" y="162.500" style="fill:#fff">3111.88</text>
<path d="M699.500 336v5M763.500 336v5M827.500 336v5M891.500 336v5M955.500 336v5M1019.500 336v5M1083.500 336v5M1147.500 336v5" stroke="#000"/>
<g class="sm"><text class="l" x="699" y="350">3 Jun 11:50</text><text class="l" x="763" y="350">3 Jun 12:30</text><text class="l" x="827" y="350">3 Jun 13:10</text><text class="l" x="891" y="350">3 Jun 13:50</text><text class="l" x="955" y="350">3 Jun 14:30</text><text class="l" x="1019" y="350">3 Jun 15:10</text><text class="l" x="1083" y="350">3 Jun 15:50</text><text class="l" x="1147" y="350">3 Jun 16:30</text></g>

<!-- trade panel -->
<rect x="693" y="136" width="173" height="199" fill="#555" stroke="#000"/>
<g stroke="#222" stroke-width="1">
<rect x="694.500" y="139.500" width="127" height="14" fill="#c8c8c8"/><rect x="827.500" y="139.500" width="14" height="14" fill="#c8c8c8"/><rect x="845.500" y="139.500" width="14" height="14" fill="#c8c8c8"/>
<rect x="694.500" y="159.500" width="76" height="24" fill="#c8e8c8"/><rect x="782.500" y="159.500" width="76" height="24" fill="#c8c8c8"/>
<rect x="694.500" y="189.500" width="76" height="29" fill="#c8c8c8"/><rect x="782.500" y="189.500" width="76" height="29" fill="#c8c8c8"/>
<rect x="694.500" y="224.500" width="76" height="29" fill="#66dd66"/><rect x="782.500" y="224.500" width="76" height="29" fill="#ff90c8"/>
<rect x="694.500" y="259.500" width="76" height="29" fill="#c8c8c8"/><rect x="782.500" y="259.500" width="76" height="29" fill="#e89868"/>
<rect x="694.500" y="294.500" width="94" height="19" fill="#c8c8c8"/><rect x="694.500" y="313.500" width="19" height="19" fill="#c8c8c8"/><rect x="713.500" y="313.500" width="56" height="19" fill="#e8e8e8"/><rect x="769.500" y="313.500" width="19" height="19" fill="#c8c8c8"/>
<rect x="799.500" y="294.500" width="60" height="39" fill="#c8c8c8"/>
</g>
<rect x="697" y="142" width="35" height="9" fill="#6f8a1e"/>
<text class="c" x="758" y="150" style="font-size:8.700px;font-weight:bold;fill:#999">ТАЙМЕР</text>
<text class="c" x="852" y="151" style="font-size:14px;fill:#222">X</text>
<g class="btn">
<text class="c" x="732.500" y="177">00:07:03</text><text class="c" x="820.500" y="177">MESM20</text>
<text class="c" x="732.500" y="209.500">Buy MRKT</text><text class="c" x="820.500" y="209.500">Sell MRKT</text>
<text class="c" x="732.500" y="244.500">Buy LIMIT</text><text class="c" x="820.500" y="244.500">Sell LIMIT</text>
<text class="c" x="732.500" y="279.500">Разворот</text><text class="c" x="820.500" y="279.500">Закрыть</text>
<text class="c" x="741.500" y="308" style="font-size:13px">Объем</text>
<text class="c" x="704" y="328" style="font-size:14px">-</text><text class="c" x="741.500" y="328.500">1.00</text><text class="c" x="779" y="328" style="font-size:14px">+</text>
<text class="c" x="829.500" y="323.500" style="font-size:28px;fill:#111">БУ</text>
</g>

<!-- tab strip -->
<rect x="691" y="358" width="571" height="2" fill="#f0f0f0"/>
<rect x="691" y="360" width="571" height="1.500" fill="#111"/>
<rect x="691" y="361" width="571" height="24" fill="#f0f0f0"/>
<rect x="691" y="362" width="39" height="22" fill="#fff"/><rect x="729.500" y="361" width="1.200" height="23" fill="#111"/>
<text class="l" x="692" y="375" style="font-size:14px">,M10</text>
<text class="l" x="744" y="375" style="font-size:13.500px;fill:#666">MESM20,M30</text>
<path d="M1230 368v6l-3-3zM1249 368v6l3-3z" fill="#aaa"/>
<rect x="691" y="384" width="571" height="1.500" fill="#aaa"/>

<!-- table -->
<rect x="692" y="385.500" width="570" height="23" fill="#f5f5f5"/>
<rect x="692" y="408" width="554" height="280" fill="#fff"/>
<rect x="692" y="428" width="554" height="20" fill="#e8e8e8"/><rect x="692" y="468" width="554" height="20" fill="#e8e8e8"/><rect x="692" y="508" width="554" height="20" fill="#e8e8e8"/><rect x="692" y="548" width="554" height="20" fill="#e8e8e8"/><rect x="692" y="588" width="554" height="20" fill="#e8e8e8"/><rect x="692" y="628" width="554" height="20" fill="#e8e8e8"/><rect x="692" y="668" width="554" height="20" fill="#e8e8e8"/>
<path d="M692 407.500H1246M692 427.500H1246M692 447.500H1246M692 467.500H1246M692 487.500H1246M692 507.500H1246M692 527.500H1246M692 547.500H1246M692 567.500H1246M692 587.500H1246M692 607.500H1246M692 627.500H1246M692 647.500H1246M692 667.500H1246M729.500 386V688M765.500 386V688M795.500 386V688M846.500 386V688M897.500 386V688M948.500 386V688M999.500 386V688M1076.500 386V688M1127.500 386V688M1189.500 386V688M1245.500 386V688" stroke="#cfcfcf"/>
<g class="hd">
<text class="l" x="695" y="401">...</text><path d="M716 400h8l-4-5z" fill="#555"/>
<text class="l" x="737" y="401">Ти...</text><text class="l" x="773" y="401">Т...</text><text class="r" x="840" y="401">Объем</text><text class="r" x="891" y="401">Цена</text><text class="r" x="942" y="401">S / L</text><text class="c" x="981" y="401">T / P</text><text class="r" x="1070" y="401">Время</text><text class="r" x="1121" y="401">Цена</text><text class="l" x="1135" y="401">Прибы...</text><text class="l" x="1202" y="401">Изме...</text>
</g>
<path d="M1250 396h7l-3.500-4z" fill="#777"/>

<g transform="translate(0,422.500)"><text class="l" x="695" y="0">mes...</text><text class="l" x="734" y="0">574...</text><text class="l" x="772" y="0">buy</text><text class="r" x="841" y="0">1</text><text class="r" x="893" y="0">3101.50</text><text class="r" x="944" y="0">3099.50</text><text class="l" x="1006" y="0">2020.06.03 ...</text><text class="r" x="1122" y="0">3102.50</text><g class="b"><text class="r" x="1184" y="0">5.00</text><text class="r" x="1241" y="0">0.03 %</text></g></g>
<g transform="translate(0,442.500)"><text class="l" x="695" y="0">mes...</text><text class="l" x="734" y="0">574...</text><text class="l" x="772" y="0">buy</text><text class="r" x="841" y="0">1</text><text class="r" x="893" y="0">3103.75</text><text class="r" x="944" y="0">3099.50</text><text class="l" x="1006" y="0">2020.06.03 ...</text><text class="r" x="1122" y="0">3104.75</text><g class="b"><text class="r" x="1184" y="0">5.00</text><text class="r" x="1241" y="0">0.03 %</text></g></g>
<g transform="translate(0,462.500)"><text class="l" x="695" y="0">mes...</text><text class="l" x="734" y="0">575...</text><text class="l" x="772" y="0">buy</text><text class="r" x="841" y="0">1</text><text class="r" x="893" y="0">3103.50</text><text class="r" x="944" y="0">3101.50</text><text class="l" x="1006" y="0">2020.06.03 ...</text><text class="r" x="1122" y="0">3104.50</text><g class="b"><text class="r" x="1184" y="0">5.00</text><text class="r" x="1241" y="0">0.03 %</text></g></g>
<g transform="translate(0,482.500)"><text class="l" x="695" y="0">mes...</text><text class="l" x="734" y="0">575...</text><text class="l" x="772" y="0">buy</text><text class="r" x="841" y="0">1</text><text class="r" x="893" y="0">3106.00</text><text class="r" x="944" y="0">3104.00</text><text class="l" x="1006" y="0">2020.06.03 ...</text><text class="r" x="1122" y="0">3106.00</text><text class="r" x="1184" y="0">0.00</text><text class="r" x="1241" y="0">0.00 %</text></g>
<g transform="translate(0,502.500)"><text class="l" x="695" y="0">mes...</text><text class="l" x="734" y="0">575...</text><text class="l" x="772" y="0">buy</text><text class="r" x="841" y="0">1</text><text class="r" x="893" y="0">3106.00</text><text class="r" x="944" y="0">3104.00</text><text class="l" x="1006" y="0">2020.06.03 ...</text><text class="r" x="1122" y="0">3106.50</text><g class="b"><text class="r" x="1184" y="0">2.50</text><text class="r" x="1241" y="0">0.02 %</text></g></g>
<g transform="translate(0,522.500)"><text class="l" x="695" y="0">mes...</text><text class="l" x="734" y="0">575...</text><text class="l" x="772" y="0">buy</text><text class="r" x="841" y="0">1</text><text class="r" x="893" y="0">3108.25</text><text class="r" x="944" y="0">3106.25</text><text class="l" x="1006" y="0">2020.06.03 ...</text><text class="r" x="1122" y="0">3108.50</text><g class="b"><text class="r" x="1184" y="0">1.25</text><text class="r" x="1241" y="0">0.01 %</text></g></g>
<g transform="translate(0,542.500)"><text class="l" x="695" y="0">mes...</text><text class="l" x="734" y="0">575...</text><text class="l" x="772" y="0">buy</text><text class="r" x="841" y="0">1</text><text class="r" x="893" y="0">3108.00</text><text class="r" x="944" y="0">3104.75</text><text class="l" x="1006" y="0">2020.06.03 ...</text><text class="r" x="1122" y="0">3109.00</text><g class="b"><text class="r" x="1184" y="0">5.00</text><text class="r" x="1241" y="0">0.03 %</text></g></g>
<g transform="translate(0,562.500)"><text class="l" x="695" y="0">mes...</text><text class="l" x="734" y="0">575...</text><text class="l" x="772" y="0">buy</text><text class="r" x="841" y="0">1</text><text class="r" x="893" y="0">3109.75</text><text class="r" x="944" y="0">3105.50</text><text class="l" x="1006" y="0">2020.06.03 ...</text><text class="r" x="1122" y="0">3110.00</text><g class="b"><text class="r" x="1184" y="0">1.25</text><text class="r" x="1241" y="0">0.01 %</text></g></g>
<g transform="translate(0,582.500)"><text class="l" x="695" y="0">mes...</text><text class="l" x="734" y="0">575...</text><text class="l" x="772" y="0">buy</text><text class="r" x="841" y="0">1</text><text class="r" x="893" y="0">3112.00</text><text class="r" x="944" y="0">3110.00</text><text class="l" x="1006" y="0">2020.06.03 ...</text><text class="r" x="1122" y="0">3113.25</text><g class="b"><text class="r" x="1184" y="0">6.25</text><text class="r" x="1241" y="0">0.04 %</text></g></g>
<g transform="translate(0,602.500)"><text class="l" x="695" y="0">mes...</text><text class="l" x="734" y="0">575...</text><text class="l" x="772" y="0">buy</text><text class="r" x="841" y="0">1</text><text class="r" x="893" y="0">3114.50</text><text class="r" x="944" y="0">3108.25</text><text class="l" x="1006" y="0">2020.06.03 ...</text><text class="r" x="1122" y="0">3115.00</text><g class="b"><text class="r" x="1184" y="0">2.50</text><text class="r" x="1241" y="0">0.02 %</text></g></g>
<g transform="translate(0,622.500)"><text class="l" x="695" y="0">mes...</text><text class="l" x="734" y="0">575...</text><text class="l" x="772" y="0">buy</text><text class="r" x="841" y="0">1</text><text class="r" x="893" y="0">3115.25</text><text class="r" x="944" y="0">3113.25</text><text class="l" x="1006" y="0">2020.06.03 ...</text><text class="r" x="1122" y="0">3116.00</text><g class="b"><text class="r" x="1184" y="0">3.75</text><text class="r" x="1241" y="0">0.02 %</text></g></g>
<g transform="translate(0,642.500)"><text class="l" x="695" y="0">mes...</text><text class="l" x="734" y="0">575...</text><text class="l" x="772" y="0">buy</text><text class="r" x="841" y="0">1</text><text class="r" x="893" y="0">3114.25</text><text class="r" x="944" y="0">3110.50</text><text class="l" x="1006" y="0">2020.06.03 ...</text><text class="r" x="1122" y="0">3114.75</text><g class="b"><text class="r" x="1184" y="0">2.50</text><text class="r" x="1241" y="0">0.02 %</text></g></g>
<g transform="translate(0,662.500)"><text class="l" x="695" y="0">mes...</text><text class="l" x="734" y="0">575...</text><text class="l" x="772" y="0">buy</text><text class="r" x="841" y="0">1</text><text class="r" x="893" y="0">3113.75</text><text class="r" x="944" y="0">3109.00</text><text class="l" x="1006" y="0">2020.06.03 ...</text><text class="r" x="1122" y="0">3113.50</text><g class="n"><text class="r" x="1184" y="0">-1.25</text><text class="r" x="1241" y="0">-0.01 %</text></g></g>
<g transform="translate(0,682.500)"><text class="l" x="695" y="0">mes...</text><text class="l" x="734" y="0">575...</text><text class="l" x="772" y="0">buy</text><text class="r" x="841" y="0">1</text><text class="r" x="893" y="0">3112.00</text><text class="r" x="944" y="0">3104.00</text><text class="l" x="1006" y="0">2020.06.03 ...</text><text class="r" x="1122" y="0">3111.00</text><g class="n"><text class="r" x="1184" y="0">-5.00</text><text class="r" x="1241" y="0">-0.03 %</text></g></g>

<!-- scrollbar -->
<rect x="1246" y="408" width="16" height="290" fill="#f0f0f0"/>
<rect x="1247.500" y="665.500" width="13" height="15" rx="2" fill="#ddd" stroke="#999"/>
<path d="M1250 689h7l-3.500 4z" fill="#666"/>

<!-- status -->
<rect x="692" y="688" width="554" height="10" fill="#c8c8c8"/>
<g><text class="l" x="698" y="702" style="font-weight:bold">: 67.22  Кредит: 0.00</text><text class="l" x="820" y="702" style="font-weight:bold">Депозит: 10 000.00</text><text class="l" x="931" y="702" style="font-weight:bold">Снятие: 0.00</text><text class="l" x="1009" y="702" style="font-weight:bold">Баланс: 10 067.22</text><text class="r" x="1184" y="702" style="font-weight:bold">250.00</text></g>

<!-- bottom tabs -->
<rect x="692" y="698" width="570" height="19" fill="#f0f0f0"/>
<rect x="692" y="698" width="570" height="1" fill="#777"/>
<rect x="754" y="698" width="66" height="19" fill="#fff"/>
<path d="M754.500 698V717M820 698V717" stroke="#111"/>
<path d="M693.500 701V716M887.500 701V716M948.500 701V716M1026.500 701V716M1089.500 701V716M1152.500 701V716M1237.500 701V716" stroke="#bbb"/>
<g>
<text class="l" x="703" y="713" style="fill:#666;font-size:14.300px">Активы</text>
<text class="l" x="763" y="713" style="fill:#111;font-size:14.300px">История</text>
<text class="l" x="830" y="713" style="fill:#888;font-size:14.300px">Новости</text>
<text class="l" x="897" y="713" style="fill:#888;font-size:14.300px">Почта</text>
<text class="l" x="958" y="713" style="fill:#666;font-size:14.300px">Календарь</text>
<text class="l" x="1037" y="713" style="fill:#666;font-size:14.300px">Алерты</text>
<text class="l" x="1099" y="713" style="fill:#666;font-size:14.300px">Статьи</text>
<text class="l" x="1163" y="713" style="fill:#666;font-size:14.300px">Библиотека</text>
<text class="l" x="1247" y="713" style="fill:#666;font-size:14.300px">VP</text>
<text class="l" x="933" y="717" style="fill:#e02020;font-size:12px">7</text>
<text class="l" x="1137" y="717" style="fill:#e02020;font-size:12px">1</text>
</g>
</svg>
</body></html>
